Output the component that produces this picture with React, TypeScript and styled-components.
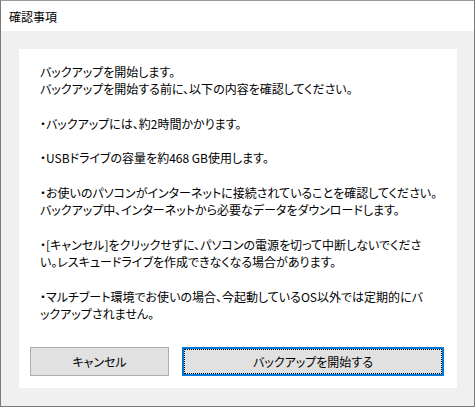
import React from "react";
import styled, { createGlobalStyle } from "styled-components";

const FONT = `"Noto Sans CJK JP", "Noto Sans", sans-serif`;

const GlobalStyle = createGlobalStyle`
  html, body {
    margin: 0;
    padding: 0;
    background: #ffffff;
  }
  body {
    font-family: ${FONT};
  }
`;

const Window = styled.div`
  width: 475px;
  height: 407px;
  box-sizing: border-box;
  border: 1px solid #7a7a7a;
  border-top-color: #9a9a9a;
  display: flex;
  flex-direction: column;
  background: #f0f0f0;
`;

const TitleBar = styled.div`
  height: 30px;
  flex-shrink: 0;
  background: #ffffff;
  display: flex;
  align-items: center;
  padding-left: 8px;
  font-size: 12px;
  color: #000000;
  font-feature-settings: "palt";
`;

const Body = styled.div`
  flex: 1;
  padding: 18px 17px 18px 18px;
  display: flex;
`;

const Panel = styled.div`
  flex: 1;
  background: #ffffff;
  display: flex;
  flex-direction: column;
  padding: 14px 13px 12px 11px;
`;

const Message = styled.div`
  flex: 1;
  padding-left: 10px;
  font-size: 12px;
  line-height: 17.3px;
  color: #000000;
  white-space: nowrap;
  font-feature-settings: "palt";
`;

const Paragraph = styled.p`
  margin: 0 0 17.3px 0;
`;

const ButtonRow = styled.div`
  display: flex;
  gap: 13px;
`;

const Button = styled.button<{ $primary?: boolean; $width: number }>`
  width: ${(p) => p.$width}px;
  height: 29px;
  box-sizing: border-box;
  background: #e1e1e1;
  border: ${(p) => (p.$primary ? "2px solid #0078d7" : "1px solid #adadad")};
  outline: ${(p) => (p.$primary ? "1px dotted #000000" : "none")};
  outline-offset: ${(p) => (p.$primary ? "-3px" : "0")};
  font-family: ${FONT};
  font-size: 12px;
  color: #000000;
  padding: 0;
  font-feature-settings: "palt";
`;

export default function App() {
  return (
    <>
      <GlobalStyle />
      <Window>
        <TitleBar>確認事項</TitleBar>
        <Body>
          <Panel>
            <Message>
              <Paragraph>
                バックアップを開始します。
                <br />
                バックアップを開始する前に、以下の内容を確認してください。
              </Paragraph>
              <Paragraph>・バックアップには、約2時間かかります。</Paragraph>
              <Paragraph>・USBドライブの容量を約468 GB使用します。</Paragraph>
              <Paragraph>
                ・お使いのパソコンがインターネットに接続されていることを確認してください。
                <br />
                バックアップ中、インターネットから必要なデータをダウンロードします。
              </Paragraph>
              <Paragraph>
                ・[キャンセル]をクリックせずに、パソコンの電源を切って中断しないでくださ
                <br />
                い。レスキュードライブを作成できなくなる場合があります。
              </Paragraph>
              <Paragraph>
                ・マルチブート環境でお使いの場合、今起動しているOS以外では定期的にバ
                <br />
                ックアップされません。
              </Paragraph>
            </Message>
            <ButtonRow>
              <Button $width={139}>キャンセル</Button>
              <Button $primary $width={262}>
                バックアップを開始する
              </Button>
            </ButtonRow>
          </Panel>
        </Body>
      </Window>
    </>
  );
}
